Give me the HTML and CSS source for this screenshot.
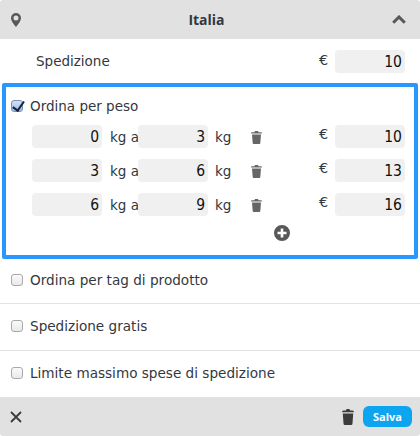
FILE: index.html
```html
<!DOCTYPE html>
<html lang="en">
<head>
  <meta charset="UTF-8" />
  <title>Spedizione - Italia</title>
  <link rel="stylesheet" href="styles.css">
</head>
<body>
  <div class="panel">
    <header class="panel-head">
      <svg class="pin" width="10" height="14" viewBox="0 0 10 14"><path fill-rule="evenodd" d="M5 0a5 5 0 0 1 5 5c0 2.800-3 6.600-5 9C3 11.600 0 7.800 0 5a5 5 0 0 1 5-5zm0 2.500a2.500 2.500 0 1 0 0 5 2.500 2.500 0 0 0 0-5z"/></svg>
      <h1>Italia</h1>
      <svg class="chevron" width="14" height="9" viewBox="0 0 14 9"><path d="M1.200 7.800 7 2l5.800 5.800" fill="none" stroke-width="3"/></svg>
    </header>

    <div class="base-row">
      <span class="base-label">Spedizione</span>
      <span class="euro">€</span>
      <span class="field">10</span>
    </div>

    <section class="weight-box">
      <label class="check-label"><input type="checkbox" checked> Ordina per peso</label>

      <div class="tier">
        <span class="field">0</span>
        <span class="unit">kg a</span>
        <span class="field">3</span>
        <span class="unit kg">kg</span>
        <svg class="trash" width="11" height="13" viewBox="0 0 11 13"><path d="M4 0h3l.6 1.200h2.200c.7 0 1.200.5 1.200 1.300H0c0-.8.5-1.300 1.200-1.300h2.200zM1 3.500h9L9.300 12a1 1 0 0 1-1 1H2.700a1 1 0 0 1-1-1z"/></svg>
        <span class="euro">€</span>
        <span class="field">10</span>
      </div>
      <div class="tier">
        <span class="field">3</span>
        <span class="unit">kg a</span>
        <span class="field">6</span>
        <span class="unit kg">kg</span>
        <svg class="trash" width="11" height="13" viewBox="0 0 11 13"><path d="M4 0h3l.6 1.200h2.200c.7 0 1.200.5 1.200 1.300H0c0-.8.5-1.300 1.200-1.300h2.200zM1 3.500h9L9.300 12a1 1 0 0 1-1 1H2.700a1 1 0 0 1-1-1z"/></svg>
        <span class="euro">€</span>
        <span class="field">13</span>
      </div>
      <div class="tier">
        <span class="field">6</span>
        <span class="unit">kg a</span>
        <span class="field">9</span>
        <span class="unit kg">kg</span>
        <svg class="trash" width="11" height="13" viewBox="0 0 11 13"><path d="M4 0h3l.6 1.200h2.200c.7 0 1.200.5 1.200 1.300H0c0-.8.5-1.300 1.200-1.300h2.200zM1 3.500h9L9.300 12a1 1 0 0 1-1 1H2.700a1 1 0 0 1-1-1z"/></svg>
        <span class="euro">€</span>
        <span class="field">16</span>
      </div>

      <svg class="add" width="16" height="16" viewBox="0 0 16 16"><path fill-rule="evenodd" d="M8 0a8 8 0 1 1 0 16A8 8 0 0 1 8 0zM6.700 3.500v3.200H3.500v2.600h3.200v3.200h2.600V9.300h3.200V6.700H9.300V3.500z"/></svg>
    </section>

    <div class="option"><label class="check-label"><input type="checkbox"> Ordina per tag di prodotto</label></div>
    <div class="option"><label class="check-label"><input type="checkbox"> Spedizione gratis</label></div>
    <div class="option"><label class="check-label"><input type="checkbox"> Limite massimo spese di spedizione</label></div>

    <footer class="panel-foot">
      <svg class="close" width="12" height="12" viewBox="0 0 12 12"><path d="M1 1l10 10M11 1 1 11" fill="none" stroke-width="1.800"/></svg>
      <svg class="foot-trash" width="12" height="16" viewBox="0 0 12 16"><path d="M4.500 0h3l.5 1.500h2.500c.8 0 1.500.7 1.500 1.800H0c0-1.100.7-1.800 1.500-1.800H4zM.8 4.500h10.400L10.500 14.500a1.500 1.500 0 0 1-1.500 1.500H3a1.500 1.500 0 0 1-1.500-1.500z"/></svg>
      <button class="save-btn">Salva</button>
    </footer>
  </div>
</body>
</html>
```

FILE: styles.css
```css
:root {
  --bar: #e1e1e1;
  --field: #f0f0f0;
  --line: #e2e2e2;
  --blue: #2a96ff;
  --icon: #58585a;
  --text: #33383f;
}

* {
  box-sizing: border-box;
  margin: 0;
  padding: 0;
}

body {
  width: 420px;
  height: 436px;
  overflow: hidden;
  background: #fff;
  color: var(--text);
  font-family: "DejaVu Sans", sans-serif;
  font-size: 13.5px;
}

.panel {
  height: 436px;
  display: flex;
  flex-direction: column;
  border-radius: 3px;
  overflow: hidden;
}

.panel-head {
  height: 39px;
  flex: none;
  display: flex;
  align-items: center;
  justify-content: space-between;
  padding: 0 14px 0 11px;
  background: var(--bar);
}

.panel-head h1 {
  font-family: "Open Sans", sans-serif;
  font-size: 14px;
  font-weight: 700;
}

.pin {
  fill: var(--icon);
}

.chevron {
  stroke: var(--icon);
}

.base-row {
  height: 44px;
  flex: none;
  display: flex;
  align-items: center;
  padding: 0 15px 0 36px;
}

.base-label {
  flex: 1;
}

.euro {
  width: 16px;
  flex: none;
  font-size: 14.5px;
  position: relative;
  top: -1px;
}

.tier .euro {
  top: -3px;
}

.field {
  width: 70px;
  height: 23px;
  flex: none;
  line-height: 24px;
  text-align: right;
  padding-right: 3px;
  background: var(--field);
  border-radius: 4px;
  font-family: "DejaVu Sans Condensed", "DejaVu Sans", sans-serif;
  font-stretch: condensed;
  font-size: 15.5px;
  color: #111;
}

.weight-box {
  height: 176px;
  flex: none;
  margin: 0 2px;
  border: 4px solid var(--blue);
  border-radius: 2px;
  padding: 11px 0 0 5px;
  display: flex;
  flex-direction: column;
}

.check-label {
  display: flex;
  align-items: center;
  gap: 7px;
}

.check-label input {
  appearance: none;
  width: 12px;
  height: 12px;
  flex: none;
  position: relative;
  border: 1px solid #a9a9a9;
  border-radius: 3px;
  background: linear-gradient(#fafafa, #e9e9e9);
}

.check-label input:checked {
  border-color: #7d8fb3;
  background: linear-gradient(#d3e0f5, #9dbbec);
}

.check-label input:checked::after {
  content: "";
  position: absolute;
  left: 3px;
  top: -2px;
  width: 5px;
  height: 10px;
  border: solid #15233d;
  border-width: 0 2px 2px 0;
  transform: rotate(35deg);
}

.tier {
  height: 23px;
  flex: none;
  margin: 11px 0 0 21px;
  display: flex;
  align-items: center;
}

.unit {
  width: 36px;
  flex: none;
  padding-left: 8px;
  white-space: nowrap;
}

.unit.kg {
  width: 43px;
  padding-left: 7px;
}

.trash {
  flex: none;
  fill: #666;
  margin: 1px 57px 0 0;
}

.add {
  flex: none;
  fill: var(--icon);
  margin: 9px 0 0 263px;
}

.option {
  height: 47px;
  flex: none;
  display: flex;
  align-items: center;
  padding: 0 0 2px 11px;
  font-size: 13.6px;
  border-bottom: 1px solid var(--line);
}

.weight-box + .option {
  height: 45px;
}

.option:last-of-type {
  height: 46px;
  border-bottom: none;
}

.panel-foot {
  flex: 1;
  display: flex;
  align-items: center;
  padding: 0 8px 0 10px;
  background: var(--bar);
}

.close {
  stroke: #3c3c3e;
  margin-right: auto;
}

.foot-trash {
  fill: #3c3c3e;
  margin-right: 9px;
}

.save-btn {
  width: 49px;
  height: 21px;
  border: none;
  border-radius: 6px;
  background: #0ea5f0;
  color: #fff;
  font-family: "Open Sans", sans-serif;
  font-size: 11px;
  font-weight: 700;
}
```
